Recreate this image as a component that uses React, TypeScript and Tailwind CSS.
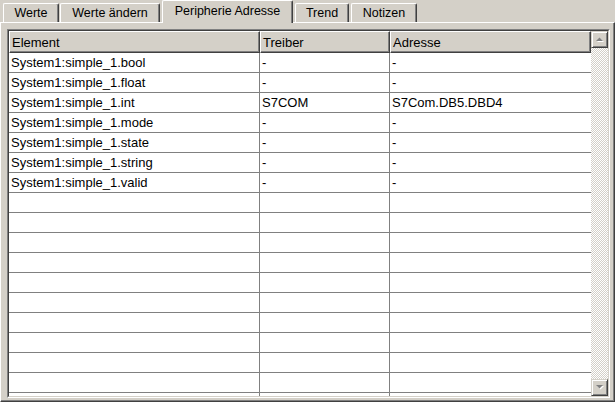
import React from "react";

const rows: [string, string, string][] = [
  ["System1:simple_1.bool", "-", "-"],
  ["System1:simple_1.float", "-", "-"],
  ["System1:simple_1.int", "S7COM", "S7Com.DB5.DBD4"],
  ["System1:simple_1.mode", "-", "-"],
  ["System1:simple_1.state", "-", "-"],
  ["System1:simple_1.string", "-", "-"],
  ["System1:simple_1.valid", "-", "-"],
];

function Tab({ label, w, ml, active }: { label: string; w: string; ml: string; active?: boolean }) {
  if (active) {
    return (
      <div
        className={`${w} ${ml} h-[23px] -mb-[1px] relative z-10 bg-[#d4d0c8] border-t border-l border-white border-r border-r-[#404040] shadow-[inset_-1px_0_#808080] rounded-tl-[2px] rounded-tr-[2px] flex items-start justify-center pt-[3px] leading-[15px] whitespace-nowrap`}
      >
        {label}
      </div>
    );
  }
  return (
    <div
      className={`${w} ${ml} h-[19px] bg-[#d4d0c8] border-t border-l border-white border-r border-r-[#404040] shadow-[inset_-1px_0_#808080] rounded-tl-[2px] rounded-tr-[2px] flex items-start justify-center pt-[2px] leading-[15px] whitespace-nowrap`}
    >
      {label}
    </div>
  );
}

function Arrow({ up }: { up?: boolean }) {
  return (
    <svg width="10" height="7" viewBox="0 0 10 7" className="block">
      {up ? (
        <>
          <polygon points="1,5 8,5 4.5,1.5" fill="#ffffff" transform="translate(1,1)" />
          <polygon points="1,5 8,5 4.5,1.5" fill="#808080" />
        </>
      ) : (
        <>
          <polygon points="1,1 8,1 4.5,4.5" fill="#ffffff" transform="translate(1,1)" />
          <polygon points="1,1 8,1 4.5,4.5" fill="#808080" />
        </>
      )}
    </svg>
  );
}

function ScrollButton({ up }: { up?: boolean }) {
  return (
    <div className="h-[17px] w-[17px] bg-[#d4d0c8] border border-t-[#d4d0c8] border-l-[#d4d0c8] border-r-[#404040] border-b-[#404040] shadow-[inset_1px_1px_#ffffff,inset_-1px_-1px_#808080] flex items-center justify-center">
      <Arrow up={up} />
    </div>
  );
}

function HeaderCell({ label, w }: { label: string; w: string }) {
  return (
    <div
      className={`${w} h-[22px] bg-[#d4d0c8] border-t border-l border-white border-r border-b border-r-[#404040] border-b-[#404040] shadow-[inset_-1px_-1px_#808080] flex items-center pl-[2px] leading-[15px] whitespace-nowrap overflow-hidden`}
    >
      {label}
    </div>
  );
}

export default function App() {
  const filled = [...rows];
  while (filled.length < 18) filled.push(["", "", ""]);
  return (
    <div className="w-[615px] h-[402px] bg-[#d4d0c8] flex flex-col overflow-hidden text-black font-['Liberation_Sans',Arial,sans-serif]">
      <div className="h-[22px] flex items-end shrink-0 text-[12.5px]">
        <Tab label="Werte" w="w-[56px]" ml="ml-[3px]" />
        <Tab label="Werte ändern" w="w-[100px]" ml="ml-[1px]" />
        <Tab label="Peripherie Adresse" w="w-[131px]" ml="ml-[2px]" active />
        <Tab label="Trend" w="w-[54px]" ml="ml-[2px]" />
        <Tab label="Notizen" w="w-[66px]" ml="ml-[2px]" />
      </div>
      <div className="flex-1 min-h-0 flex border-t border-l border-white border-r border-b border-r-[#404040] border-b-[#404040] shadow-[inset_-1px_-1px_#808080] pt-[6px] pl-[6px] pr-[4px] pb-[3px] text-[13px]">
        <div className="flex-1 min-w-0 flex border border-t-[#808080] border-l-[#808080] border-r-white border-b-white">
          <div className="flex-1 min-w-0 flex border border-t-[#404040] border-l-[#404040] border-r-[#d4d0c8] border-b-[#d4d0c8] bg-white overflow-hidden">
            <div className="flex-1 min-w-0 flex flex-col overflow-hidden">
              <div className="flex shrink-0">
                <HeaderCell label="Element" w="w-[251px]" />
                <HeaderCell label="Treiber" w="w-[130px]" />
                <HeaderCell label="Adresse" w="flex-1" />
              </div>
              {filled.map((r, i) => (
                <div key={i} className="h-[20px] shrink-0 flex border-b border-[#808080]">
                  <div className="w-[251px] border-r border-[#808080] pl-[2px] flex items-center leading-[15px] whitespace-nowrap">
                    {r[0]}
                  </div>
                  <div className="w-[130px] border-r border-[#808080] pl-[2px] flex items-center leading-[15px] whitespace-nowrap">
                    {r[1]}
                  </div>
                  <div className="flex-1 pl-[2px] flex items-center leading-[15px] whitespace-nowrap">
                    {r[2]}
                  </div>
                </div>
              ))}
            </div>
            <div className="w-[17px] shrink-0 flex flex-col">
              <ScrollButton up />
              <div className="flex-1 bg-[repeating-conic-gradient(#ffffff_0_25%,#d4d0c8_0_50%)] bg-[length:2px_2px]" />
              <ScrollButton />
            </div>
          </div>
        </div>
      </div>
    </div>
  );
}
